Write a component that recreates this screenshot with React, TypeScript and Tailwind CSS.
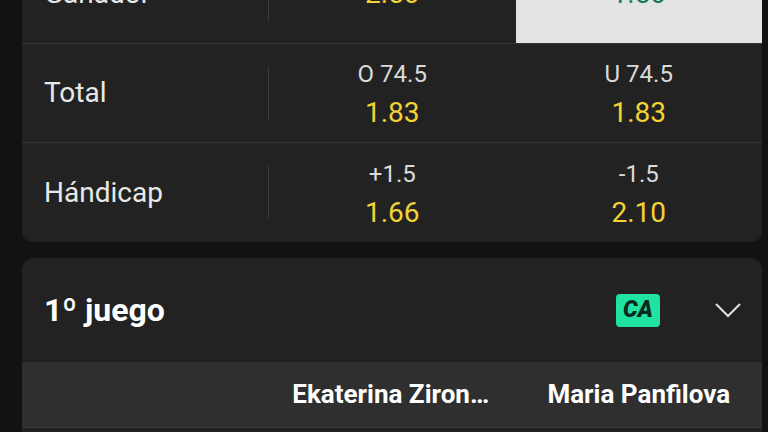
import React from 'react';

interface MarketRow {
  label: string;
  cells: { line?: string; odds: string; selected?: boolean }[];
}

const rows: MarketRow[] = [
  {
    label: 'Ganador',
    cells: [{ odds: '2.50' }, { odds: '1.50', selected: true }],
  },
  {
    label: 'Total',
    cells: [
      { line: 'O 74.5', odds: '1.83' },
      { line: 'U 74.5', odds: '1.83' },
    ],
  },
  {
    label: 'Hándicap',
    cells: [
      { line: '+1.5', odds: '1.66' },
      { line: '-1.5', odds: '2.10' },
    ],
  },
];

const App: React.FC = () => {
  return (
    <div
      className="w-[768px] h-[432px] overflow-hidden bg-[#121212] pl-[22px] pr-[6px]"
      style={{ fontFamily: 'Roboto, "Noto Sans", Arial, sans-serif' }}
    >
      {/* Market card */}
      <div className="-mt-[55px] bg-[#222222] rounded-b-[10px] overflow-hidden">
        {rows.map((row, i) => (
          <div
            key={row.label}
            className={`flex h-[99px] ${i < rows.length - 1 ? 'border-b border-[#353535]' : ''}`}
          >
            <div className="w-[246px] flex items-center pl-[22px] text-[28px] text-[#e8e8e8]">
              {row.label}
            </div>
            <div className="flex items-center">
              <div className="w-px h-[53px] bg-[#3a3a3a]" />
            </div>
            {row.cells.map((cell, j) => (
              <div
                key={j}
                className={`flex-1 flex flex-col items-center justify-center ${
                  cell.selected ? 'bg-[#e3e3e3]' : ''
                } ${cell.line ? 'pt-[4px]' : ''}`}
              >
                {cell.line && (
                  <div className="text-[24px] leading-[30px] text-[#dadada]">{cell.line}</div>
                )}
                <div
                  className={`text-[28px] leading-[36px] ${
                    cell.selected ? 'text-[#16795a]' : 'text-[#f3d233]'
                  } ${cell.line ? 'mt-[6px]' : ''}`}
                >
                  {cell.odds}
                </div>
              </div>
            ))}
          </div>
        ))}
      </div>

      {/* 1º juego card */}
      <div className="mt-[16px] bg-[#222222] rounded-t-[12px] overflow-hidden">
        <div className="h-[104px] flex items-center pl-[22px] pr-[20px]">
          <div className="flex-1 text-[32px] font-bold text-white">1º juego</div>
          <div className="w-[44px] h-[33px] rounded-[4px] bg-[#20e3a2] flex items-center justify-center text-[23px] font-black italic text-[#0d2a1f]">
            CA
          </div>
          <svg className="ml-[54px]" width="28" height="16" viewBox="0 0 28 16" fill="none">
            <path d="M2 2 L14 14 L26 2" stroke="#e0e0e0" strokeWidth="2" />
          </svg>
        </div>
        <div className="flex h-[66px] bg-[#2f2f2f] border-b border-[#3a3a3a]">
          <div className="w-[247px]" />
          <div className="flex-1 flex items-center justify-center text-[26px] font-bold text-white">
            <span className="max-w-[200px] truncate">Ekaterina Zironova</span>
          </div>
          <div className="flex-1 flex items-center justify-center text-[26px] font-bold text-white">
            Maria Panfilova
          </div>
        </div>
        <div className="h-[40px]" />
      </div>
    </div>
  );
};

export default App;
